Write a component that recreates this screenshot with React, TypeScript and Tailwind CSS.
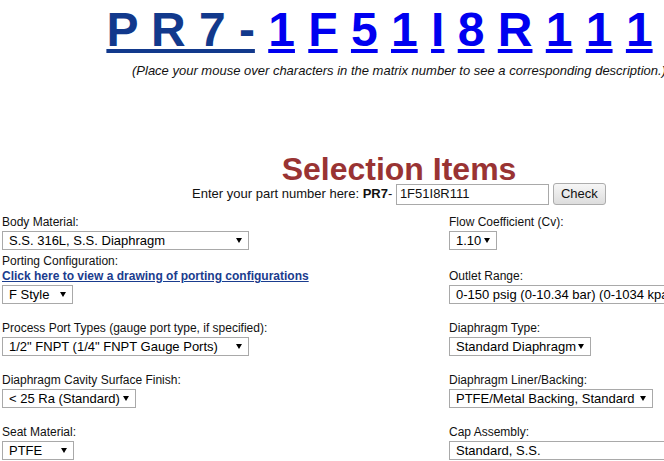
import React from "react";

function Arrow() {
  return (
    <svg width="6" height="5" viewBox="0 0 6 5" className="shrink-0">
      <path d="M0 0h6L3 5z" fill="#000" />
    </svg>
  );
}

function Select({ value, width, tall }: { value: string; width: string; tall?: boolean }) {
  return (
    <div className={tall ? "h-[24px] pt-px" : "h-[22px] pt-px"}>
      <div
        className={`${width} h-[19px] border border-[#a9a9a9] bg-white flex items-center justify-between pl-[6px] pr-[6px] text-[13px] leading-[15px] text-black whitespace-nowrap overflow-hidden`}
      >
        <span>{value}</span>
        <Arrow />
      </div>
    </div>
  );
}

function Label({ children }: { children: React.ReactNode }) {
  return <div className="h-[15px] text-[12px] leading-[15px] text-[#111] whitespace-nowrap">{children}</div>;
}

function Blank() {
  return <div className="h-[15px]" />;
}

export default function App() {
  const matrix = ["1", "F", "5", "1", "I", "8", "R", "1", "1", "1"];

  const rows = [
    {
      left: { label: "Process Port Types (gauge port type, if specified):", value: '1/2" FNPT (1/4" FNPT Gauge Ports)', w: "w-[247px]" },
      right: { label: "Diaphragm Type:", value: "Standard Diaphragm", w: "w-[142px]" },
    },
    {
      left: { label: "Diaphragm Cavity Surface Finish:", value: "< 25 Ra (Standard)", w: "w-[134px]" },
      right: { label: "Diaphragm Liner/Backing:", value: "PTFE/Metal Backing, Standard", w: "w-[204px]" },
    },
    {
      left: { label: "Seat Material:", value: "PTFE", w: "w-[72px]" },
      right: { label: "Cap Assembly:", value: "Standard, S.S.", w: "w-[247px]" },
    },
  ];

  return (
    <div className="w-[664px] h-[461px] overflow-hidden bg-white font-['Liberation_Sans',Arial,sans-serif]">
      <div className="w-[798px]">
        {/* Matrix number */}
        <div className="pt-[2px] text-center pr-[39px] text-[48px] leading-[55px] font-bold whitespace-pre">
          <a className="text-[#12398c] underline">P R 7 -</a>{" "}
          {matrix.map((c, i) => (
            <React.Fragment key={i}>
              <a className="text-[#0000f0] underline">{c}</a>
              {i < matrix.length - 1 ? " " : ""}
            </React.Fragment>
          ))}
        </div>
        <div className="mt-[6px] text-center text-[13px] leading-[15px] italic text-[#111] whitespace-nowrap">
          (Place your mouse over characters in the matrix number to see a corresponding description.)
        </div>

        {/* Selection Items */}
        <div className="mt-[78px] text-center text-[32px] leading-[27px] font-bold text-[#993333]">Selection Items</div>
        <div className="h-[22px] flex items-center justify-center text-[13px] text-[#111]">
          <span className="whitespace-pre">Enter your part number here: </span>
          <b>PR7</b>
          <span className="whitespace-pre">- </span>
          <div className="w-[153px] h-[21px] border border-[#a9a9a9] pl-[3px] flex items-center">1F51I8R111</div>
          <button className="ml-[4px] w-[53px] h-[22px] border border-[#acacac] rounded-[3px] bg-gradient-to-b from-[#f6f6f6] to-[#dddddd] text-[13px]">
            Check
          </button>
        </div>

        {/* Options */}
        <div className="mt-[10px] grid grid-cols-[447px_1fr] pl-[2px]">
          <div>
            <Label>Body Material:</Label>
            <Select value="S.S. 316L, S.S. Diaphragm" width="w-[247px]" tall />
            <Label>Porting Configuration:</Label>
            <div className="h-[15px] text-[12px] leading-[15px] font-bold">
              <a className="text-[#1a3c8e] underline">Click here to view a drawing of porting configurations</a>
            </div>
            <Select value="F Style" width="w-[71px]" />
          </div>
          <div>
            <Label>Flow Coefficient (Cv):</Label>
            <Select value="1.10" width="w-[48px]" tall />
            <Blank />
            <Label>Outlet Range:</Label>
            <Select value="0-150 psig (0-10.34 bar) (0-1034 kpa)" width="w-[250px]" />
          </div>
          {rows.map((r, i) => (
            <React.Fragment key={i}>
              <div>
                <Blank />
                <Label>{r.left.label}</Label>
                <Select value={r.left.value} width={r.left.w} />
              </div>
              <div>
                <Blank />
                <Label>{r.right.label}</Label>
                <Select value={r.right.value} width={r.right.w} />
              </div>
            </React.Fragment>
          ))}
        </div>
      </div>
    </div>
  );
}
